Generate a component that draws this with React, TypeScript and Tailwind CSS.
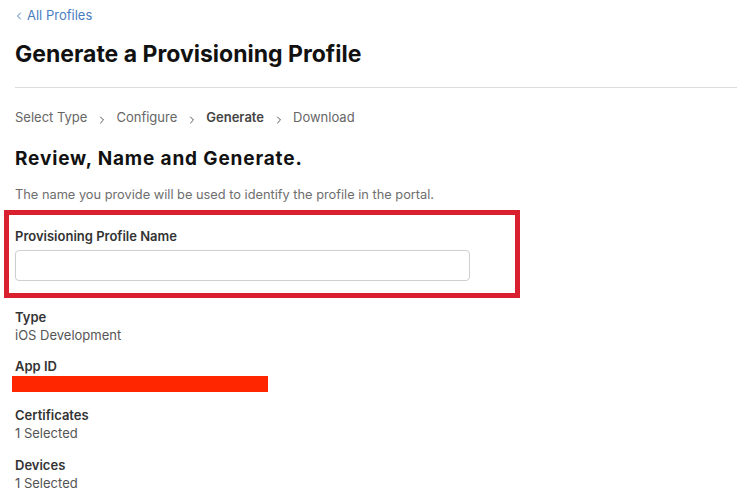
import { ChevronLeft, ChevronRight } from "lucide-react";

const steps = [
  { label: "Select Type", active: false },
  { label: "Configure", active: false },
  { label: "Generate", active: true },
  { label: "Download", active: false },
];

const details = [
  { title: "Certificates", value: "1 Selected" },
  { title: "Devices", value: "1 Selected" },
];

export default function App() {
  return (
    <div className="min-h-[502px] bg-white pl-[15px] font-['Inter','Liberation_Sans',sans-serif] text-[#333]">
      <a href="#" className="flex h-[18px] mt-[7px] items-center text-[13px] text-[#4a7dbf]">
        <ChevronLeft className="w-3 h-3 -ml-[2px] mr-[2px]" strokeWidth={2} />
        All Profiles
      </a>

      <h1 className="mt-[14px] h-[30px] text-[23px] leading-[30px] font-bold text-[#111]">
        Generate a Provisioning Profile
      </h1>

      <div className="mt-[18px] h-px bg-[#dcdcdc]" />

      <div className="mt-[21px] flex h-[18px] items-center text-[13px] text-[#666]">
        {steps.map((step, i) => (
          <div key={step.label} className="flex items-center">
            {i > 0 && <ChevronRight className="w-3 h-3 mx-[8.5px] mt-[3px] text-[#555]" strokeWidth={2} />}
            <span className={step.active ? "font-semibold text-[#444]" : ""}>{step.label}</span>
          </div>
        ))}
      </div>

      <h2 className="mt-[20px] h-[24px] text-[19px] leading-[24px] font-bold text-[#111] tracking-[0.85px]">
        Review, Name and Generate.
      </h2>

      <p className="mt-[15px] h-[18px] text-[12.8px] leading-[18px] text-[#6e6e6e]">
        The name you provide will be used to identify the profile in the portal.
      </p>

      <div className="-ml-[11px] mt-[6px] w-[516px] border-[5px] border-[#d8202e] pl-[6px] pt-[12px] pb-[12px]">
        <label className="block h-[18px] text-[13px] leading-[18px] font-semibold text-[#333]">
          Provisioning Profile Name
        </label>
        <input
          type="text"
          className="mt-[5px] block h-[31px] w-[455px] rounded-[4px] border border-[#cfcfcf] bg-white px-2 text-[13px] outline-none"
        />
      </div>

      <div className="mt-[10px] flex flex-col text-[13px] leading-[18px]">
        <div className="font-semibold text-[#333]">Type</div>
        <div className="text-[#555]">iOS Development</div>

        <div className="mt-[13px] font-semibold text-[#333]">App ID</div>
        <div className="-ml-[3px] mt-[1px] h-[16px] w-[256px] bg-[#ff2600]" />

        {details.map((d) => (
          <div key={d.title} className="mt-[14px] flex flex-col">
            <div className="font-semibold text-[#333]">{d.title}</div>
            <div className="text-[#555]">{d.value}</div>
          </div>
        ))}
      </div>
    </div>
  );
}
